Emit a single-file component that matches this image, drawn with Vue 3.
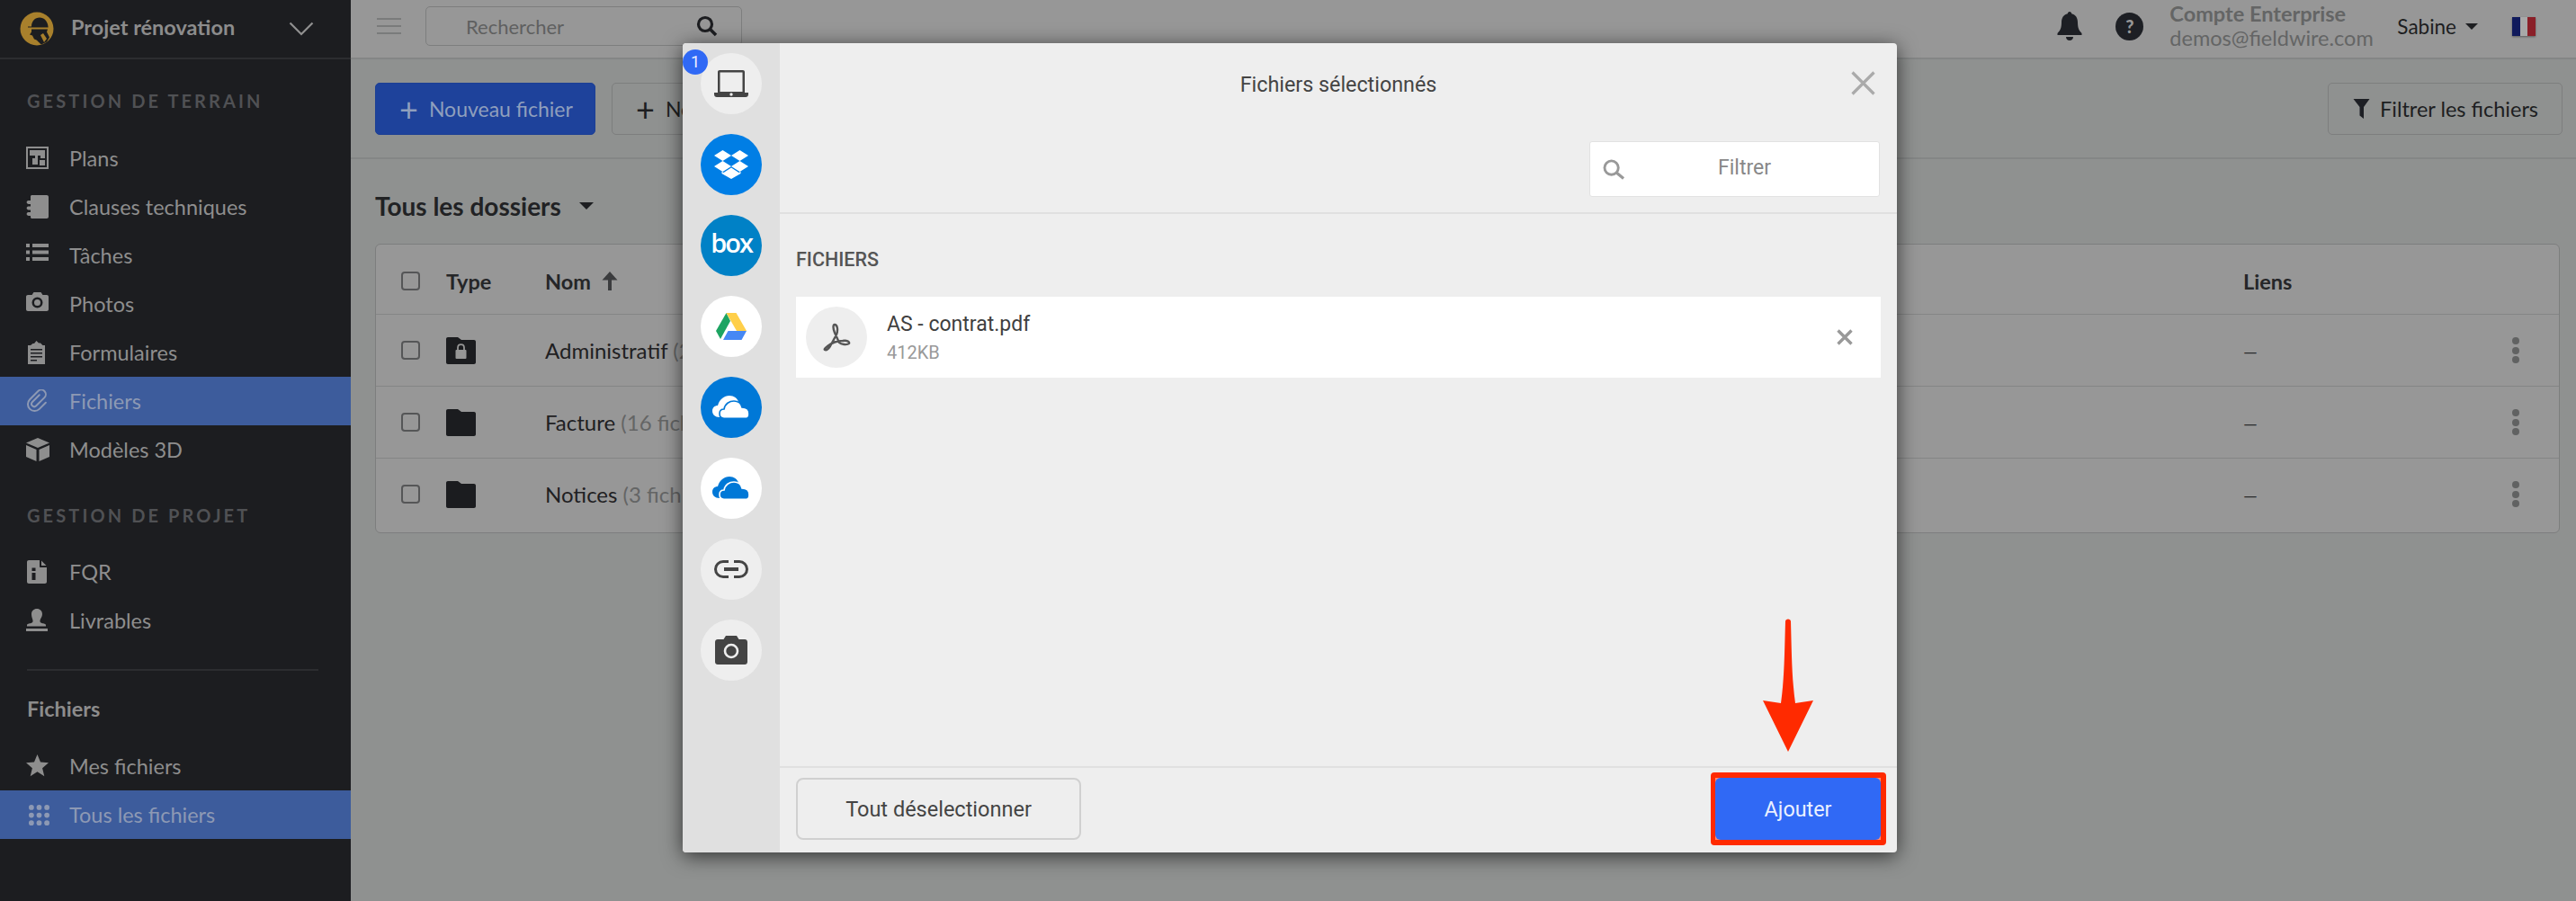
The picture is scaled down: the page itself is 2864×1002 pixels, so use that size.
<script setup>
const fieldNav = [
  { label: 'Plans', icon: 'plans' },
  { label: 'Clauses techniques', icon: 'specs' },
  { label: 'Tâches', icon: 'tasks' },
  { label: 'Photos', icon: 'photo' },
  { label: 'Formulaires', icon: 'forms' },
  { label: 'Fichiers', icon: 'clip', active: true },
  { label: 'Modèles 3D', icon: 'cube' }
]
const projectNav = [
  { label: 'FQR', icon: 'rfi' },
  { label: 'Livrables', icon: 'stamp' }
]
const fileNav = [
  { label: 'Mes fichiers', icon: 'star' },
  { label: 'Tous les fichiers', icon: 'grid', active: true }
]
const folders = [
  { name: 'Administratif', count: '(2 fichiers)', lock: true },
  { name: 'Facture', count: '(16 fichiers)' },
  { name: 'Notices', count: '(3 fichiers)' }
]

const navIcons = {
  plans: 'M0 0h25v25H0zM2 2v21h21V2zM4 4h17v9h-5v-3h-3v10H7v-7h3v-3H4zM15 15h6v6h-6z',
  specs: 'M5 1.500C5 .7 5.700 0 6.500 0H23c1.100 0 2 .9 2 2v22c0 1.100-.9 2-2 2H6.500C5.700 26 5 25.300 5 24.500V23H3c-3-.5-3-3.500-.5-4H5v-2.500H3c-3-.5-3-3.500-.5-4H5V10H3C0 9.500 0 6.500 2.500 6H5z',
  tasks: 'M0 0h4v4H0zM7 0h18v4H7zM0 7.500h4v4H0zM7 7.500h18v4H7zM0 15h4v4H0zM7 15h18v4H7z',
  photo: 'M8.500 0h8l2 3H23c1.100 0 2 .9 2 2v14c0 1.100-.9 2-2 2H2c-1.100 0-2-.9-2-2V5c0-1.100.9-2 2-2h4.500zM12.500 5.500a6 6 0 1 0 0 12 6 6 0 0 0 0-12zM12.500 8a3.500 3.500 0 1 1 0 7 3.500 3.500 0 0 1 0-7z',
  forms: 'M11.500 0 14 2.500h2L18.500 5H21v21H2V5h3L7.500 3h1.500zM5 9v1.500h13V9zM5 13v1.500h13V13zM5 17v1.500h13V17zM5 21v1.500h7V21z',
  cube: 'M13 0l13 5.500L13 11 0 5.500zM0 8l11.500 5v13L0 21zM26 8v13l-11.500 5V13z',
  rfi: 'M3 0h12v7c0 .6.400 1 1 1h7v16c0 1.100-.9 2-2 2H3c-1.100 0-2-.9-2-2V2C1 .9 1.900 0 3 0zM17 .5 22.500 6H17zM6.500 8.500v3.500h4V8.500zM6.500 14v8h4v-8z',
  stamp: 'M12 0c3.500 0 6 2.500 6 6 0 3-2 4.500-2.500 7-.3 1.500.5 2.500 2 3 2 .4 4.500.5 4.500 2.500v1H1v-1c0-2 2.500-2.100 4.500-2.500 1.500-.5 2.300-1.500 2-3C7 10.500 6 9 6 6c0-3.500 2.500-6 6-6zM0 22h24v3H0z',
  star: 'M12.500 0l3.500 8.600 9 .7-6.900 5.900 2.200 9-7.800-4.900-7.800 4.900 2.200-9L0 9.300l9-.7z'
}
</script>

<template>
  <div class="page">
    <aside class="sidebar">
      <div class="project">
        <svg class="logo" viewBox="0 0 38 38">
          <circle cx="19" cy="19" r="18.500" fill="#a8802c" />
          <path d="M9 16.500h4c0-6 4-10 9-10s9 4 9.500 10v1H9z" fill="#1c1d20" />
          <path d="M13 19.500h18l-1 3 3 6-3 5-6 3c-3-2-4-5-8-6l-2-4-3-1 2-3z" fill="#1c1d20" />
          <path d="M23 26l3-2 4 6-3 4z" fill="#a8802c" />
        </svg>
        <span class="project-name">Projet rénovation</span>
        <svg class="chevron" viewBox="0 0 28 16"><path d="M1.500 1.500 14 14 26.500 1.500" fill="none" stroke="#909090" stroke-width="2.200" /></svg>
      </div>

      <div class="section-label first">GESTION DE TERRAIN</div>
      <a v-for="item in fieldNav" :key="item.label" class="nav-item" :class="{ active: item.active }">
        <svg v-if="item.icon === 'clip'" class="nav-icon" viewBox="0 0 26 26"><path d="M10 7v11a3 3 0 0 0 6 0V5a5 5 0 0 0-10 0v13a7.500 7.500 0 0 0 15 0V8" fill="none" stroke="currentColor" stroke-width="2" stroke-linecap="round" transform="rotate(45 13 13) translate(-.5 0)" /></svg>
        <svg v-else class="nav-icon" viewBox="0 0 26 26"><path :d="navIcons[item.icon]" fill="currentColor" fill-rule="evenodd" /></svg>
        <span>{{ item.label }}</span>
      </a>

      <div class="section-label second">GESTION DE PROJET</div>
      <a v-for="item in projectNav" :key="item.label" class="nav-item">
        <svg class="nav-icon" viewBox="0 0 26 26"><path :d="navIcons[item.icon]" fill="currentColor" fill-rule="evenodd" /></svg>
        <span>{{ item.label }}</span>
      </a>

      <div class="divider"></div>
      <div class="files-label">Fichiers</div>
      <a v-for="item in fileNav" :key="item.label" class="nav-item" :class="{ active: item.active }">
        <svg v-if="item.icon === 'grid'" class="nav-icon grid-icon" viewBox="0 0 24 24" fill="currentColor">
          <template v-for="row in [3, 12, 21]" :key="row">
            <circle cx="3" :cy="row" r="3" /><circle cx="12" :cy="row" r="3" /><circle cx="21" :cy="row" r="3" />
          </template>
        </svg>
        <svg v-else class="nav-icon" viewBox="0 0 26 26"><path :d="navIcons[item.icon]" fill="currentColor" /></svg>
        <span>{{ item.label }}</span>
      </a>
    </aside>

    <main class="main">
      <header class="topbar">
        <div class="burger"><i></i><i></i><i></i></div>
        <div class="search">
          <span>Rechercher</span>
          <svg viewBox="0 0 24 24" class="search-icon"><circle cx="10" cy="10" r="7.500" fill="none" stroke="#1d1e21" stroke-width="3.200" /><path d="M15.500 15.500 22 22" stroke="#1d1e21" stroke-width="3.600" /></svg>
        </div>
        <div class="top-right">
          <svg class="bell" viewBox="0 0 28 32"><path d="M14 0c1.300 0 2.200 1 2.200 2.300 4.600 1 6.800 4.600 6.800 9.700 0 6 1.500 9 4.500 12v2H.5v-2c3-3 4.500-6 4.500-12 0-5.100 2.200-8.700 6.800-9.700C11.800 1 12.700 0 14 0zM10 28h8c0 2.500-1.800 4-4 4s-4-1.500-4-4z" fill="#1d1f24" /></svg>
          <div class="help">?</div>
          <div class="account">
            <div class="account-name">Compte Enterprise</div>
            <div class="account-mail">demos@fieldwire.com</div>
          </div>
          <div class="user">Sabine<i class="caret small"></i></div>
          <div class="flag"><i class="fr-blue"></i><i class="fr-white"></i><i class="fr-red"></i></div>
        </div>
      </header>

      <div class="toolbar">
        <button class="btn primary"><span class="plus">+</span>Nouveau fichier</button>
        <button class="btn outline"><span class="plus">+</span>Nouveau dossier</button>
        <button class="btn outline filter">
          <svg viewBox="0 0 18 22" class="funnel"><path d="M0 0h18L11.500 9v13L7 18.500V9z" fill="#1d1f24" /></svg>
          Filtrer les fichiers
        </button>
      </div>

      <section class="content">
        <h2 class="folder-title">Tous les dossiers<i class="caret"></i></h2>
        <div class="table">
          <div class="row head">
            <i class="check"></i>
            <span>Type</span>
            <span class="sort">Nom
              <svg viewBox="0 0 18 21"><path d="M9 0l8.500 9.500H11V21H7V9.500H.5z" fill="#3b3c3e" /></svg>
            </span>
            <span>Liens</span>
          </div>
          <div class="row" v-for="f in folders" :key="f.name">
            <i class="check"></i>
            <svg class="folder" viewBox="0 0 33 30">
              <path d="M2 0h11l4 3h14c1.100 0 2 .9 2 2v23c0 1.100-.9 2-2 2H2c-1.100 0-2-.9-2-2V2C0 .9.900 0 2 0z" fill="#1b1c1f" />
              <template v-if="f.lock">
                <rect x="10.500" y="14" width="12" height="10" rx="1" fill="#969696" />
                <path d="M13 14v-2.500c0-4.500 7-4.500 7 0V14" fill="none" stroke="#969696" stroke-width="1.800" />
              </template>
            </svg>
            <span class="file-name">{{ f.name }} <em>{{ f.count }}</em></span>
            <span class="dash">—</span>
            <span class="dots"><i></i><i></i><i></i></span>
          </div>
        </div>
      </section>
    </main>

    <div class="modal">
      <nav class="rail">
        <div class="source grey">
          <span class="badge">1</span>
          <svg viewBox="0 0 38 30" width="38" height="30"><path d="M4 2c0-1.100.9-2 2-2h26c1.100 0 2 .9 2 2v23h4v2c0 1.700-1.300 3-3 3H3c-1.700 0-3-1.300-3-3v-2h4zM6.500 2.500V24h25V2.500z" fill="#444" fill-rule="evenodd" /><circle cx="19" cy="27" r="1.700" fill="#eee" /></svg>
        </div>
        <div class="source dropbox">
          <svg viewBox="0 0 38 32" width="38" height="32" fill="#fff"><path d="M9.500 0 19 6 9.500 12 0 6zM28.500 0 38 6l-9.500 6L19 6zM0 18l9.500-6 9.500 6-9.500 6zM38 18l-9.500-6-9.500 6 9.500 6z" /><path d="M19 19.500l8.500 5.500 2-1.200V26L19 32 8.500 26v-2.200l2 1.200z" /></svg>
        </div>
        <div class="source box"><span>box</span></div>
        <div class="source white">
          <svg viewBox="0 0 34 30" width="34" height="30"><path d="M11.500 0 0 20l5 9L16 9z" fill="#1da462" /><path d="M11.500 0h11L34 20H23z" fill="#ffcf4a" /><path d="M8 30 13.500 20H34l-5.500 10z" fill="#4688f4" /></svg>
        </div>
        <div class="source onedrive">
          <svg viewBox="0 0 42 26" width="42" height="26" fill="#fff" stroke="#0078d7"><use href="#cloud-pair" /></svg>
        </div>
        <div class="source white">
          <svg viewBox="0 0 42 26" width="42" height="26" fill="#0078d7" stroke="#fff"><use href="#cloud-pair" /></svg>
        </div>
        <div class="source grey">
          <svg viewBox="0 0 38 20" width="38" height="20" fill="none" stroke="#444" stroke-width="3"><path d="M16 1.500H10a8.500 8.500 0 0 0 0 17h6M22 1.500h6a8.500 8.500 0 0 1 0 17h-6" /><path d="M11 10h16" stroke-width="4" /></svg>
        </div>
        <div class="source grey">
          <svg viewBox="0 0 36 32" width="36" height="32"><path d="M12 0h12l2.500 4H33c1.700 0 3 1.300 3 3v22c0 1.700-1.300 3-3 3H3c-1.700 0-3-1.300-3-3V7c0-1.700 1.300-3 3-3h6.500z" fill="#444" /><circle cx="18" cy="17" r="7" fill="none" stroke="#eee" stroke-width="2.600" /></svg>
        </div>
        <svg width="0" height="0" class="defs">
          <defs>
            <g id="cloud-pair">
              <path stroke="none" d="M8 24C3 24 0 21 0 17c0-4 3-6 6-6C8 4 13 0 19 0c5 0 9 3 10 7v13L8 24z" />
              <path stroke-width="1.600" d="M13 25.200c-4 0-5-3.200-5-5.200 0-3 2-5 5-5 1-6 6-9 11-9s8 3 9 7c5 0 8 3 8 7 0 3-1 5.200-3 5.200z" />
            </g>
          </defs>
        </svg>
      </nav>

      <div class="panel">
        <div class="panel-head">
          <div class="panel-title">Fichiers sélectionnés</div>
          <svg class="close" viewBox="0 0 27 27"><path d="M1.500 1.500l24 24M25.500 1.500l-24 24" stroke="#aaa" stroke-width="3.200" /></svg>
          <div class="filter-input">
            <svg viewBox="0 0 26 24" width="25" height="23"><circle cx="10" cy="10" r="8" fill="none" stroke="#999" stroke-width="3" /><path d="M15.500 15.500 24 22.500" stroke="#999" stroke-width="3.400" /></svg>
            <span>Filtrer</span>
          </div>
        </div>

        <div class="panel-body">
          <div class="group-label">FICHIERS</div>
          <div class="file-row">
            <div class="file-thumb">
              <svg viewBox="0 0 32 32" width="32" height="32"><path d="M14 2c-2 0-2 4 0 9l5 11c2 2 9 3 11 1 1-2-3-4-7-3-6 0-12 2-17 6-2 2-4 3-3 4 2 1 4-1 6-4l7-13c2-5 1-11-2-11z" fill="none" stroke="#555" stroke-width="2.400" /></svg>
            </div>
            <div class="file-text">
              <div class="file-title">AS - contrat.pdf</div>
              <div class="file-size">412KB</div>
            </div>
            <svg class="remove" viewBox="0 0 18 18"><path d="M1.500 1.500l15 15M16.500 1.500l-15 15" stroke="#999" stroke-width="3.400" /></svg>
          </div>
        </div>

        <div class="panel-foot">
          <button class="foot-btn">Tout déselectionner</button>
          <div class="add-ring"><button class="add-btn">Ajouter</button></div>
        </div>
      </div>
    </div>

    <!-- annotation drawn over the screenshot -->
    <svg class="arrow" viewBox="0 0 56 148"><path d="M25 3c0-3.500 6-3.500 6 0 1 35 1 62 5 91l20-3-28 57L0 91l20 3c4-29 4-56 5-91z" fill="#ff2a00" /></svg>
  </div>
</template>

<style>
html, body { margin: 0; background: #8f9190; }
</style>

<style scoped>
.page {
  display: flex;
  width: 2864px;
  height: 1002px;
  overflow: hidden;
  position: relative;
  font-family: Lato, "Liberation Sans", sans-serif;
  color: #1d1e21;
}
.sidebar {
  width: 390px;
  flex-shrink: 0;
  background: #1c1d20;
  color: #8e8e8e;
}
.project {
  height: 64px;
  border-bottom: 2px solid #2c2d30;
  display: flex;
  align-items: center;
  padding-left: 22px;
}
.logo { width: 38px; height: 38px; }
.project-name {
  margin-left: 19px;
  margin-bottom: 5px;
  font-size: 23.500px;
  font-weight: 700;
  color: #8c8c8c;
}
.chevron { width: 28px; height: 16px; margin-left: 60px; }
.section-label {
  font-size: 20px;
  font-weight: 700;
  letter-spacing: 3.100px;
  color: #505154;
  padding-left: 30px;
  line-height: 24px;
}
.first { margin-top: 34px; margin-bottom: 25px; }
.second { margin-top: 34px; margin-bottom: 24px; }
.nav-item {
  display: flex;
  align-items: center;
  height: 54px;
  padding-left: 29px;
  font-size: 23.500px;
}
.nav-item.active { background: #3d5c9c; color: #8d99b4; }
.nav-icon { width: 26px; height: 26px; margin-right: 22px; flex-shrink: 0; }
.grid-icon { width: 23px; height: 23px; margin-left: 3px; margin-right: 22px; }
.divider { height: 2px; background: #2c2d30; margin: 27px 36px 0 30px; }
.files-label {
  font-size: 23.500px;
  font-weight: 700;
  color: #8c8c8c;
  padding-left: 30px;
  margin-top: 27px;
  margin-bottom: 22px;
  line-height: 30px;
}

.main { flex: 1; min-width: 0; background: #8f9190; }
.topbar {
  height: 64px;
  background: #979797;
  border-bottom: 2px solid #848686;
  display: flex;
  align-items: center;
  padding: 0 0 6px 29px;
  box-sizing: content-box;
  height: 58px;
}
.burger { width: 27px; display: flex; flex-direction: column; gap: 6px; }
.burger i { height: 2px; background: #7a7b7b; }
.search {
  width: 352px;
  height: 44px;
  margin-left: 27px;
  border: 1px solid #7d7e7e;
  border-radius: 5px;
  display: flex;
  align-items: center;
  justify-content: space-between;
  padding: 0 26px 0 44px;
  font-size: 22px;
  color: #5f6060;
  box-sizing: border-box;
}
.search-icon { width: 24px; height: 24px; }
.top-right { margin-left: auto; display: flex; align-items: center; padding-right: 45px; }
.bell { width: 28px; height: 32px; }
.help {
  width: 31px;
  height: 31px;
  margin-left: 37px;
  border-radius: 50%;
  background: #1d1f24;
  color: #979797;
  font-weight: 900;
  font-size: 20px;
  text-align: center;
  line-height: 31px;
}
.account { margin-left: 29px; width: 253px; font-size: 23.500px; color: #646565; line-height: 27px; }
.account-name { font-weight: 700; }
.user { display: flex; align-items: center; font-size: 22.500px; color: #1d1e21; }
.caret {
  display: inline-block;
  width: 0;
  height: 0;
  border: 8px solid transparent;
  border-top-color: #1d1e21;
  border-bottom: 0;
  margin-left: 20px;
}
.caret.small { border-width: 7px; border-bottom: 0; margin-left: 10px; }
.flag { display: flex; width: 26px; height: 21px; margin-left: 38px; box-shadow: 0 1px 2px rgba(0, 0, 0, .4); }
.flag i { flex: 1; }
.fr-blue { background: #101a5c; }
.fr-white { background: #a8a8a8; }
.fr-red { background: #8a1f28; }

.toolbar {
  height: 111px;
  border-bottom: 2px solid #848686;
  display: flex;
  align-items: center;
  padding: 0 15px 0 27px;
  box-sizing: border-box;
}
.btn {
  height: 58px;
  border-radius: 5px;
  font: inherit;
  font-size: 23px;
  box-sizing: border-box;
  display: flex;
  align-items: center;
  white-space: nowrap;
}
.primary { width: 245px; background: #1e429b; border: 1px solid #1c3f94; color: #8f9fbd; padding-left: 26px; }
.outline { width: 260px; margin-left: 18px; background: transparent; border: 1px solid #7d7e7e; color: #1d1e21; padding-left: 26px; }
.plus { font-size: 36px; font-weight: 400; margin-right: 12px; line-height: 30px; }
.filter { width: 261px; margin-left: auto; padding-left: 27px; font-size: 23.500px; }
.funnel { width: 19px; height: 22px; margin-right: 11px; }

.content { padding: 0 18px 0 27px; }
.folder-title {
  margin: 0;
  padding-top: 34px;
  height: 60px;
  line-height: 36px;
  font-size: 28px;
  font-weight: 700;
  color: #212224;
  box-sizing: content-box;
  display: flex;
  align-items: flex-start;
}
.folder-title .caret { margin-top: 14px; }
.table { border: 1px solid #7d7e7e; border-radius: 6px; background: #979797; height: 322px; box-sizing: border-box; }
.row {
  display: grid;
  grid-template-columns: 50px 110px 1fr 293px 20px;
  align-items: center;
  height: 79px;
  padding: 0 38px 0 28px;
  border-top: 1px solid #848585;
  font-size: 24px;
}
.row.head { height: 77px; padding-top: 4px; box-sizing: border-box; border-top: 0; font-size: 23.500px; font-weight: 700; color: #252628; }
.check { width: 21px; height: 21px; border: 2px solid #555657; border-radius: 4px; box-sizing: border-box; display: block; }
.sort { display: flex; align-items: center; gap: 12px; color: #252628; }
.sort svg { width: 18px; height: 21px; }
.folder { width: 33px; height: 30px; }
.file-name { color: #1f2022; white-space: nowrap; }
.file-name em { font-style: normal; color: #646565; }
.dash { font-size: 20px; color: #2a2b2c; }
.dots { display: flex; flex-direction: column; gap: 2.500px; align-items: center; }
.dots i { width: 8px; height: 8px; border-radius: 50%; background: #616262; }

.modal {
  position: absolute;
  left: 759px;
  top: 48px;
  width: 1350px;
  height: 900px;
  display: flex;
  border-radius: 4px;
  overflow: hidden;
  background: #eee;
  box-shadow: 0 4px 22px rgba(0, 0, 0, .65);
  font-family: Roboto, "Liberation Sans", sans-serif;
}
.rail {
  width: 108px;
  flex-shrink: 0;
  background: #e0e0e0;
  display: flex;
  flex-direction: column;
  align-items: center;
  gap: 22px;
  padding-top: 11px;
  box-sizing: border-box;
}
.defs { position: absolute; }
.source {
  width: 68px;
  height: 68px;
  border-radius: 50%;
  display: flex;
  align-items: center;
  justify-content: center;
  position: relative;
  flex-shrink: 0;
}
.grey { background: #eee; }
.white { background: #fff; }
.dropbox { background: #007ee5; }
.onedrive { background: #0078d7; }
.box { background: #0081c6; color: #fff; }
.box span { font-family: "Open Sans", sans-serif; font-size: 29px; font-weight: 600; letter-spacing: -2px; line-height: 68px; margin-top: -6px; }
.badge {
  position: absolute;
  left: -20px;
  top: -4px;
  width: 28px;
  height: 28px;
  border-radius: 50%;
  background: #3069f5;
  color: #eef;
  font-size: 18px;
  line-height: 28px;
  text-align: center;
}
.panel { flex: 1; display: flex; flex-direction: column; min-width: 0; }
.panel-head { height: 190px; border-bottom: 2px solid #e0e0e0; position: relative; box-sizing: border-box; padding-top: 31px; }
.panel-title { text-align: center; font-size: 23.300px; line-height: 30px; color: #444; }
.close { position: absolute; right: 24px; top: 31px; width: 27px; height: 27px; }
.filter-input {
  position: absolute;
  right: 19px;
  top: 109px;
  width: 323px;
  height: 62px;
  background: #fff;
  border: 1px solid #e2e2e2;
  border-radius: 3px;
  display: flex;
  align-items: center;
  box-sizing: border-box;
  padding-left: 14px;
  color: #888;
  font-size: 23px;
}
.filter-input span { margin-left: 103px; margin-bottom: 3px; }
.panel-body { flex: 1; padding: 0 18px; }
.group-label { margin-top: 37px; font-size: 21.500px; line-height: 28px; font-weight: 500; color: #555; }
.file-row {
  margin-top: 27px;
  height: 90px;
  background: #fff;
  display: flex;
  align-items: center;
  padding-left: 11px;
}
.file-thumb {
  width: 68px;
  height: 68px;
  border-radius: 50%;
  background: #eee;
  display: flex;
  align-items: center;
  justify-content: center;
}
.file-text { margin-left: 22px; flex: 1; }
.file-title { font-size: 23px; color: #3f3f3f; line-height: 30px; }
.file-size { font-size: 20px; color: #999; line-height: 26px; margin-top: 3px; }
.remove { width: 18px; height: 18px; margin-right: 31px; }
.panel-foot {
  height: 96px;
  border-top: 2px solid #e0e0e0;
  box-sizing: border-box;
  display: flex;
  justify-content: space-between;
  align-items: flex-start;
  padding: 11px 18px 0;
}
.foot-btn {
  width: 317px;
  height: 69px;
  background: transparent;
  border: 2px solid #d0d0d0;
  border-radius: 8px;
  font: inherit;
  font-size: 23.500px;
  color: #444;
}
.add-ring {
  margin: -6px -6px 0 0;
  border: 6px solid #ff2a00;
  border-left-width: 5px;
  border-radius: 4px;
  background: #ff8a70;
  display: flex;
}
.add-btn {
  width: 184px;
  height: 69px;
  background: #3069f5;
  border: 0;
  border-radius: 6px;
  font: inherit;
  font-size: 23.300px;
  color: #eaf0ff;
}
.arrow { position: absolute; left: 1960px; top: 688px; width: 56px; height: 148px; }
</style>
